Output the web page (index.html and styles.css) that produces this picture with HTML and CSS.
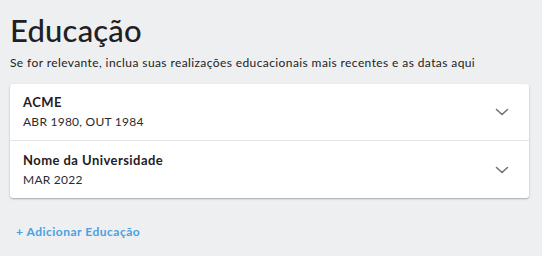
FILE: index.html
```html
<!doctype html>
<html>
<head>
    <title>Educação</title>
    <link rel="stylesheet" href="styles.css">
</head>
<body>
<div class="section">
    <h1 class="section-title">Educação</h1>
    <p class="section-hint">Se for relevante, inclua suas realizações educacionais mais recentes e as datas aqui</p>

    <!-- list of entries -->
    <div class="entry-list">
        <div class="entry">
            <div class="entry-text">
                <div class="entry-name">ACME</div>
                <div class="entry-dates">ABR 1980, OUT 1984</div>
            </div>
            <svg class="chevron" width="14" height="8" viewBox="0 0 14 8"><path d="M1.5 1.5 L7 6.5 L12.5 1.5" fill="none" stroke="#6f7378" stroke-width="1.6" stroke-linecap="round" stroke-linejoin="round"/></svg>
        </div>
        <div class="entry">
            <div class="entry-text">
                <div class="entry-name">Nome da Universidade</div>
                <div class="entry-dates">MAR 2022</div>
            </div>
            <svg class="chevron" width="14" height="8" viewBox="0 0 14 8"><path d="M1.5 1.5 L7 6.5 L12.5 1.5" fill="none" stroke="#6f7378" stroke-width="1.6" stroke-linecap="round" stroke-linejoin="round"/></svg>
        </div>
    </div>

    <div class="add-link">+ Adicionar Educação</div>
</div>
</body>
</html>
```

FILE: styles.css
```css
* { margin: 0; padding: 0; box-sizing: border-box; }
body { background-color: #eeeff1; font-family: Lato, 'Open Sans', sans-serif; color: #1f2023; }

.section { padding: 11px 13px 0 10px; }
.section-title { font-size: 31px; font-weight: 500; line-height: 38px; letter-spacing: 0.2px; }
.section-hint { font-size: 12px; line-height: 16px; margin-top: 6px; color: #222; letter-spacing: 0.4px; }

.entry-list { margin-top: 13px; background: #fff; border-radius: 3px; box-shadow: 0 1px 2px rgba(0,0,0,0.3); }
.entry { display: flex; align-items: center; justify-content: space-between; height: 57px; padding: 0 20px 0 13px; border-bottom: 1px solid #e4e5e7; }
.entry:last-child { border-bottom: none; }
.entry-name { font-size: 13px; font-weight: bold; line-height: 17px; letter-spacing: 0.45px; }
.entry-dates { font-size: 12px; line-height: 16px; margin-top: 3px; color: #2a2b2e; letter-spacing: 0.25px; }

.add-link { margin: 26px 0 0 6px; font-size: 12px; font-weight: bold; color: #4b9fe0; cursor: pointer; letter-spacing: 0.5px; }
```
